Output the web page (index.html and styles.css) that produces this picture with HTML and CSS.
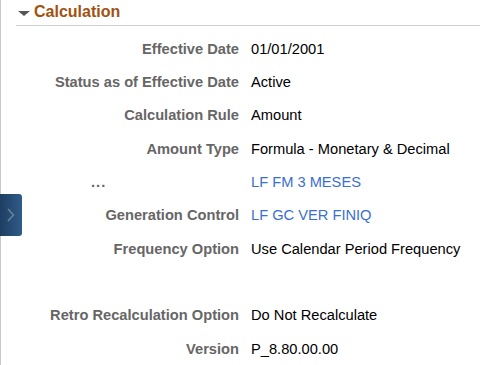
FILE: index.html
```html
<!DOCTYPE html>
<html lang="en">
<head>
  <meta charset="UTF-8" />
  <title>Calculation</title>
  <link rel="stylesheet" href="styles.css">
</head>
<body>
  <div class="page">
    <div class="section-head">
      <span class="caret"></span>
      <h2>Calculation</h2>
    </div>

    <div class="fields">
      <div class="lbl">Effective Date</div>
      <div class="val">01/01/2001</div>

      <div class="lbl">Status as of Effective Date</div>
      <div class="val">Active</div>

      <div class="lbl">Calculation Rule</div>
      <div class="val">Amount</div>

      <div class="lbl">Amount Type</div>
      <div class="val">Formula - Monetary &amp; Decimal</div>

      <div class="lbl dots">...</div>
      <div class="val"><a href="#">LF FM 3 MESES</a></div>

      <div class="lbl">Generation Control</div>
      <div class="val"><a href="#">LF GC VER FINIQ</a></div>

      <div class="lbl">Frequency Option</div>
      <div class="val">Use Calendar Period Frequency</div>

      <div class="lbl"></div>
      <div class="val"></div>

      <div class="lbl">Retro Recalculation Option</div>
      <div class="val">Do Not Recalculate</div>

      <div class="lbl">Version</div>
      <div class="val">P_8.80.00.00</div>
    </div>
  </div>

  <div class="side-tab" title="Open panel">
    <svg width="8" height="14" viewBox="0 0 8 14">
      <path d="M1 1 L6.5 7 L1 13" fill="none" stroke="#6d7f93" stroke-width="1.6"/>
    </svg>
  </div>
</body>
</html>
```

FILE: styles.css
```css
body { margin: 0; font-family: "Liberation Sans", Arial, sans-serif; background: #fff; color: #000; }
.page {
  border-left: 1px solid #c8c8c8; min-height: 365px; box-sizing: border-box;
  padding-left: 15px;
}
.section-head {
  display: flex; align-items: center; height: 26px; box-sizing: border-box;
  border-bottom: 1px solid #cfcfcf; padding-left: 2px; padding-bottom: 1px;
}
.caret {
  width: 0; height: 0; border-left: 6px solid transparent; border-right: 6px solid transparent;
  border-top: 5px solid #555; margin-right: 4px; margin-top: 2px;
}
.section-head h2 {
  margin: 0; font-size: 16px; font-weight: bold; color: #a1520f; line-height: 20px;
}
.fields {
  display: grid; grid-template-columns: 223px 1fr; grid-auto-rows: 33.33px;
  column-gap: 12px; align-items: center; padding-top: 6px; font-size: 14.67px;
}
.lbl { text-align: right; font-weight: bold; color: #666; white-space: nowrap; }
.lbl.dots { text-align: left; padding-left: 75px; letter-spacing: 1px; }
.val { white-space: nowrap; }
.val a { color: #3a6fd0; text-decoration: none; }
.side-tab {
  position: absolute; left: 0; top: 194px; width: 22px; height: 42px;
  background: linear-gradient(to right, #1e3e62, #2f5c88); border-radius: 0 3px 3px 0;
  display: flex; align-items: center; justify-content: center;
}
```
